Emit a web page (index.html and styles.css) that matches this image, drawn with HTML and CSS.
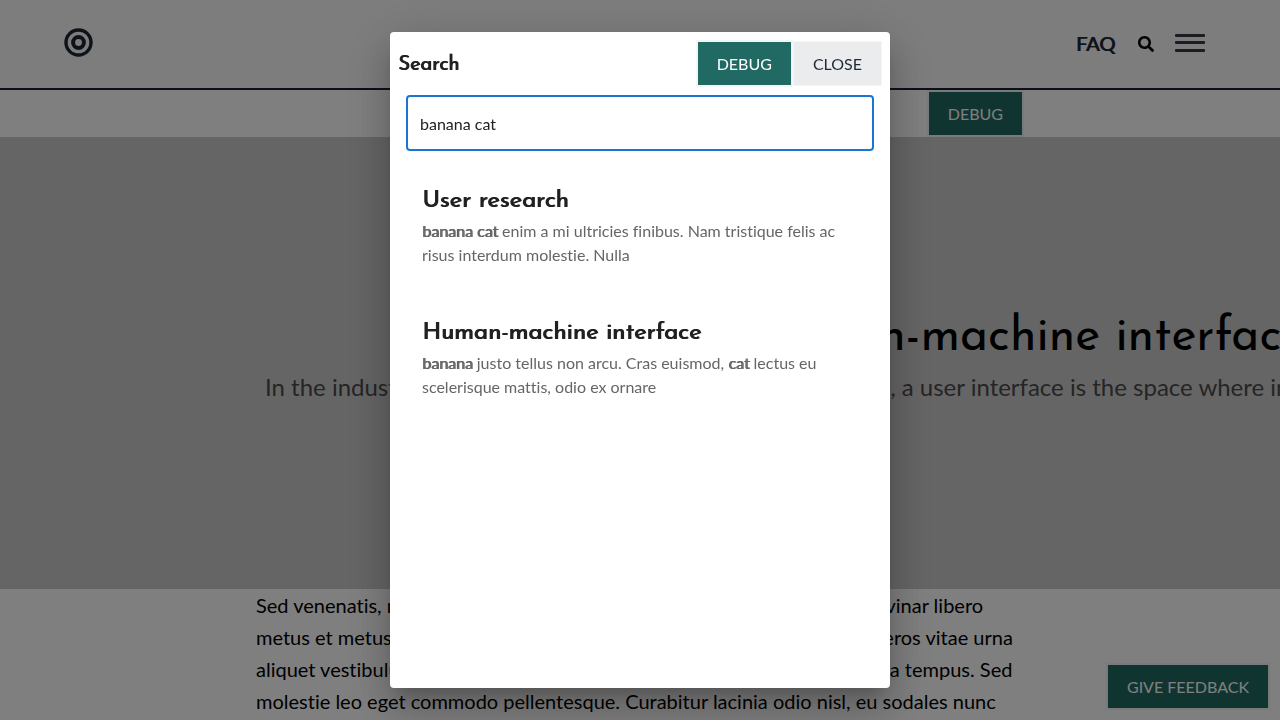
FILE: index.html
```html
<!DOCTYPE html>
<html lang="en">
<head>
<meta charset="utf-8">
<meta name="viewport" content="width=device-width, initial-scale=1">
<title>Human-machine interface</title>
<link rel="stylesheet" href="styles.css">
</head>
<body>
<header class="site-header">
  <a class="logo" href="#" aria-label="Home">
    <svg viewBox="0 0 30 30" width="30" height="30" fill="none" stroke="currentColor"><circle cx="15.500" cy="14.500" r="12.500" stroke-width="3.400"/><circle cx="15.500" cy="14.500" r="5.400" stroke-width="4"/></svg>
  </a>
  <nav class="site-nav">
    <a class="nav-link" href="#">FAQ</a>
    <button class="icon-button search-toggle" aria-label="Search">
      <svg viewBox="0 0 512 512" width="16" height="16" fill="currentColor"><path d="M505 442.700L405.300 343c-4.500-4.500-10.600-7-17-7H372c27.600-35.300 44-79.700 44-128C416 93.100 322.900 0 208 0S0 93.100 0 208s93.100 208 208 208c48.300 0 92.700-16.400 128-44v16.300c0 6.400 2.500 12.500 7 17l99.700 99.700c9.400 9.400 24.600 9.400 33.900 0l28.300-28.300c9.400-9.400 9.400-24.600.1-34zM208 336c-70.700 0-128-57.200-128-128 0-70.700 57.200-128 128-128 70.700 0 128 57.200 128 128 0 70.700-57.200 128-128 128z"/></svg>
    </button>
    <button class="icon-button" aria-label="Menu">
      <svg viewBox="0 0 30 18" width="30" height="18" fill="#373a47"><rect width="30" height="3" rx="1"/><rect y="7" width="30" height="3" rx="1"/><rect y="15" width="30" height="3" rx="1"/></svg>
    </button>
  </nav>
</header>
<main>
  <div class="toolbar"><button class="button">Debug</button></div>
  <section class="hero">
    <div class="hero-inner">
      <h1 class="hero-title">Human-machine interface</h1>
      <p class="hero-text">In the industrial design field of human-computer interaction, a user interface is the space where interactions between people and machines occur.</p>
    </div>
  </section>
  <article class="article">
    <p>Sed venenatis, nisl et rhoncus maximus, augue lorem tempor dolor, a pulvinar libero<br>metus et metus. Aenean porta dui sed mauris tincidunt, quis ultrices vel eros vitae urna<br>aliquet vestibulum. Donec faucibus nibh ut sapien tincidunt, velit viverra a tempus. Sed<br>molestie leo eget commodo pellentesque. Curabitur lacinia odio nisl, eu sodales nunc</p>
  </article>
</main>
<button class="button feedback">Give feedback</button>
<div class="overlay">
  <div class="dialog" role="dialog" aria-modal="true" aria-labelledby="dialog-title">
    <div class="dialog-header">
      <h2 class="dialog-title" id="dialog-title">Search</h2>
      <div class="dialog-actions">
        <button class="button">Debug</button>
        <button class="button button-light">Close</button>
      </div>
    </div>
    <div class="search-row"><input class="search-input" type="text" aria-label="Search" value="banana cat"></div>
    <ul class="results">
      <li class="result">
        <h3 class="result-title">User research</h3>
        <p class="result-text"><b>banana cat</b> enim a mi ultricies finibus. Nam tristique felis ac risus interdum molestie. Nulla</p>
      </li>
      <li class="result">
        <h3 class="result-title">Human-machine interface</h3>
        <p class="result-text"><b>banana</b> justo tellus non arcu. Cras euismod, <b>cat</b> lectus eu scelerisque mattis, odio ex ornare</p>
      </li>
    </ul>
  </div>
</div>
</body>
</html>
```

FILE: styles.css
```css
* { box-sizing: border-box; }
body {
  margin: 0;
  height: 100vh;
  overflow: hidden;
  background: #fff;
  color: #000;
  font: 16px/24px Lato, sans-serif;
  font-variant-ligatures: none;
}
h1, h2, h3, p, ul { margin: 0; padding: 0; }
button, input { font: inherit; }
h1, h2, h3 { font-family: "Josefin Sans", Lato, sans-serif; font-weight: 400; }
h2, h3 { text-shadow: 1px 0 currentColor; }

.site-header {
  display: flex;
  align-items: center;
  justify-content: space-between;
  height: 90px;
  padding: 0 75px 2px 63px;
  background: #fafafa;
  border-bottom: 2px solid #161e30;
}
.logo { display: flex; color: #1a2436; }
.site-nav { display: flex; align-items: center; }
.nav-link {
  color: #1f2937;
  font-size: 20px;
  text-decoration: none;
  text-shadow: 1px 0 currentColor;
}
.icon-button {
  display: flex;
  padding: 0;
  border: 0;
  background: none;
  color: #000;
}
.search-toggle { margin: 2px 21px 0 23px; }

.button {
  padding: 9px 19px;
  min-height: 47px;
  border: 2px solid #f3f5f7;
  background: #206a63;
  color: #fff;
  line-height: 24px;
  text-transform: uppercase;
}
.button-light {
  border: 1px solid #f3f5f7;
  min-height: 45px;
  background: #ebecee;
  color: #1f2937;
}
.toolbar {
  display: flex;
  justify-content: flex-end;
  max-width: 768px;
  margin: 0 auto;
}
.hero {
  display: flex;
  align-items: center;
  height: 452px;
  padding-left: 265px;
  overflow: hidden;
  background: #cacaca;
}
.hero-inner { flex: none; padding-bottom: 14px; text-align: center; white-space: nowrap; }
.hero-title { font-size: 48px; line-height: 62px; }
.hero-text { font-size: 24px; line-height: 36px; color: #4a4a4a; }
.article {
  max-width: 768px;
  margin: 0 auto;
  font-size: 20px;
  line-height: 32px;
  white-space: nowrap;
}
.feedback { position: fixed; right: 10px; bottom: 10px; }

.overlay {
  position: fixed;
  inset: 0;
  display: flex;
  justify-content: center;
  padding: 32px;
  background: rgba(0, 0, 0, 0.5);
}
.dialog {
  width: 500px;
  max-width: 100%;
  padding: 8px;
  border-radius: 4px;
  background: #fff;
  color: #212121;
  box-shadow: 0 11px 15px -7px rgba(0, 0, 0, 0.2), 0 24px 38px 3px rgba(0, 0, 0, 0.14), 0 9px 46px 8px rgba(0, 0, 0, 0.12);
}
.dialog-header { display: flex; justify-content: space-between; height: 47px; }
.dialog-title { font-size: 20px; line-height: 50px; }
.dialog-actions { display: flex; align-items: center; }
.search-row { padding: 8px; }
.search-input {
  display: block;
  width: 100%;
  height: 56px;
  padding: 0 12px;
  border: 2px solid #1976d2;
  border-radius: 4px;
  outline: 0;
  color: #212121;
}
.results { list-style: none; padding: 8px; }
.result { padding: 16px 16px 32px; }
.result-title { font-size: 24px; line-height: 36px; }
.result-text { color: #666; }
.result-text b { font-weight: 400; text-shadow: 1px 0 currentColor; }
```
